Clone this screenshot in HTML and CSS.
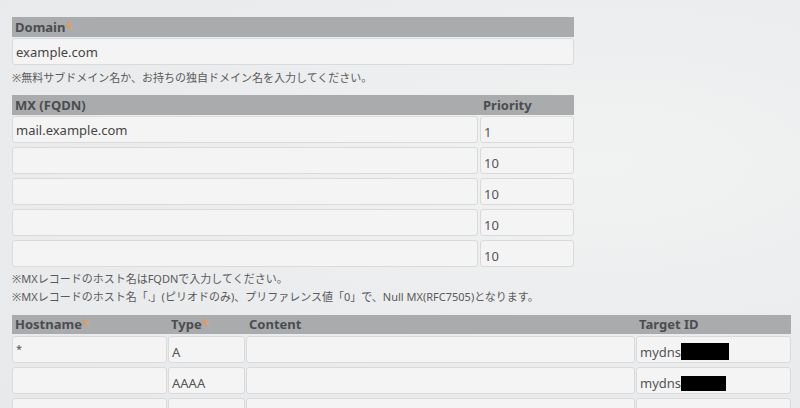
FILE: index.html
```html
<!DOCTYPE html>
<html lang="ja">
<head>
<meta charset="utf-8">
<title>DNS</title>
<link rel="stylesheet" href="styles.css">
</head>
<body>
<div class="page">
  <section class="domain">
    <div class="hd"><span class="lbl">Domain<span class="req">*</span></span></div>
    <div class="field mid">example.com</div>
    <p class="note">※無料サブドメイン名か、お持ちの独自ドメイン名を入力してください。</p>
  </section>

  <section class="mx">
    <div class="grid mxgrid">
      <div class="hdrow mxgrid">
        <span class="lbl">MX (FQDN)</span>
        <span class="lbl">Priority</span>
      </div>
      <div class="field mid">mail.example.com</div><div class="field low">1</div>
      <div class="field"></div><div class="field low">10</div>
      <div class="field"></div><div class="field low">10</div>
      <div class="field"></div><div class="field low">10</div>
      <div class="field"></div><div class="field low">10</div>
    </div>
    <p class="note notes">※MXレコードのホスト名はFQDNで入力してください。<br>※MXレコードのホスト名「.」(ピリオドのみ)、プリファレンス値「0」で、Null MX(RFC7505)となります。</p>
  </section>

  <section class="hosts">
    <div class="grid hgrid">
      <div class="hdrow hgrid">
        <span class="lbl">Hostname<span class="req">*</span></span>
        <span class="lbl">Type<span class="req">*</span></span>
        <span class="lbl">Content</span>
        <span class="lbl">Target ID</span>
      </div>
      <div class="field high"><span class="star">*</span></div><div class="field low">A</div><div class="field"></div><div class="field low">mydns<span class="redact r1"></span></div>
      <div class="field"></div><div class="field low">AAAA</div><div class="field"></div><div class="field low">mydns<span class="redact r2"></span></div>
      <div class="field"></div><div class="field"></div><div class="field"></div><div class="field"></div>
    </div>
  </section>
</div>
</body>
</html>
```

FILE: styles.css
```css
html, body {
  margin: 0;
  padding: 0;
  height: 100%;
  overflow: hidden;
}
body {
  background: radial-gradient(ellipse at 75% 40%, #f1f2f2 0%, #ebeced 55%, #e8e9ea 100%);
  font-family: "Noto Sans", "Noto Sans CJK JP", sans-serif;
  color: #444;
}
.page {
  padding: 17px 0 0 12px;
}
.domain {
  width: 562px;
}
.hd, .hdrow {
  height: 20px;
  background: #a9abad;
  box-sizing: border-box;
}
.lbl {
  display: block;
  padding-left: 3px;
  font-size: 13px;
  font-weight: 700;
  line-height: 20px;
  color: #4b4d50;
}
.req {
  color: #e99a55;
}
.field {
  height: 27px;
  box-sizing: border-box;
  background: #f4f4f4;
  border: 1px solid #d9dadb;
  border-radius: 3px;
  font-size: 13px;
  line-height: 25px;
  padding: 0 0 0 3px;
  color: #454545;
  white-space: nowrap;
  overflow: hidden;
}
.domain .field {
  margin-top: 1px;
}
.field.mid {
  line-height: 27px;
}
.field.low {
  line-height: 28px;
  padding-top: 1px;
  color: #555;
}
.field.high {
  line-height: 22px;
}
.star {
  font-size: 11px;
  color: #555;
}
.note {
  margin: 0;
  font-size: 11px;
  line-height: 18px;
  color: #5a5a5a;
}
.domain .note {
  margin-top: 4px;
}
.mx {
  margin-top: 8px;
  width: 562px;
}
.grid {
  display: grid;
}
.mxgrid {
  grid-template-columns: 466px 94px;
  column-gap: 2px;
  row-gap: 4px;
}
.mx .hdrow {
  grid-column: 1 / -1;
  display: grid;
  margin-bottom: -3px;
}
.notes {
  margin-top: 3px;
}
.hosts {
  margin-top: 9px;
  width: 780px;
}
.hgrid {
  grid-template-columns: 155px 77px 389px 155px;
  column-gap: 1px;
  row-gap: 4px;
}
.hosts .hdrow {
  grid-column: 1 / -1;
  display: grid;
  height: 19px;
  margin-bottom: -2px;
}
.hosts .lbl {
  line-height: 19px;
}
.redact {
  display: inline-block;
  vertical-align: top;
  background: #000;
  height: 17px;
  margin-top: 5px;
}
.r1 { width: 48px; }
.r2 { width: 45px; height: 15px; margin-top: 7px; }
```
